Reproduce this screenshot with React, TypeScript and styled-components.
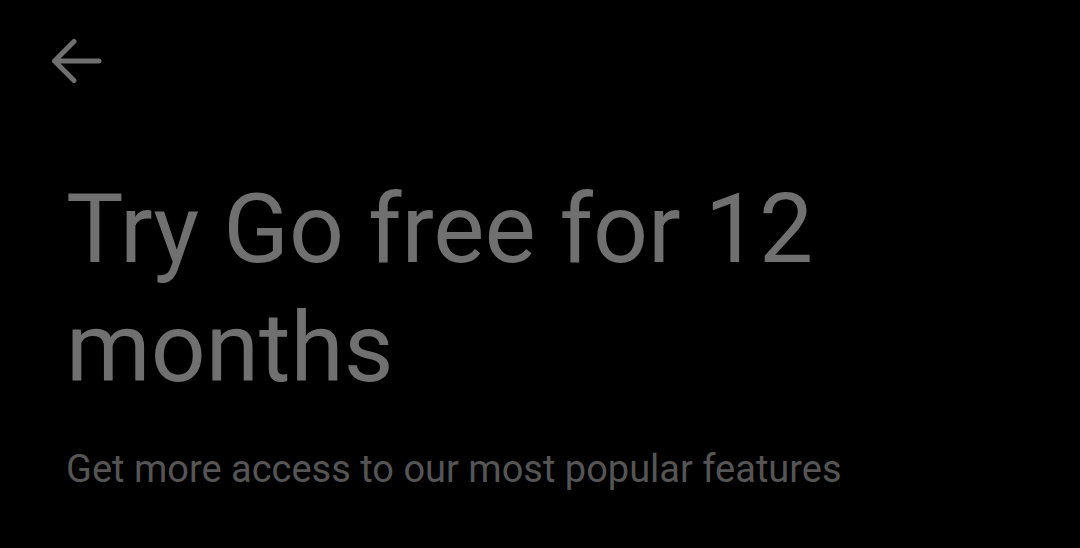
import React from "react";
import styled, { createGlobalStyle } from "styled-components";

const GlobalStyle = createGlobalStyle`
  html, body {
    margin: 0;
    padding: 0;
    background: #000000;
  }
  body {
    font-family: Roboto, "Noto Sans", "Liberation Sans", sans-serif;
  }
`;

const Screen = styled.div`
  width: 1080px;
  height: 548px;
  background: #000000;
  display: flex;
  flex-direction: column;
  overflow: hidden;
`;

const TopBar = styled.div`
  display: flex;
  align-items: center;
  height: 46px;
  padding: 38px 0 0 50px;
`;

const BackButton = styled.button`
  display: flex;
  align-items: center;
  justify-content: center;
  width: 52px;
  height: 46px;
  padding: 0;
  border: none;
  background: transparent;
  cursor: pointer;
`;

const Content = styled.div`
  display: flex;
  flex-direction: column;
  padding: 86px 0 0 66px;
`;

const Title = styled.h1`
  margin: 0;
  font-family: Roboto, "Noto Sans", "Liberation Sans", sans-serif;
  font-weight: 400;
  font-size: 96.5px;
  line-height: 119px;
  color: #707070;
  max-width: 820px;
`;

const Subtitle = styled.p`
  margin: 37px 0 0 0;
  font-family: Roboto, "Noto Sans", "Liberation Sans", sans-serif;
  font-weight: 400;
  font-size: 38px;
  line-height: 48px;
  color: #555555;
`;

export default function App() {
  return (
    <>
      <GlobalStyle />
      <Screen>
        <TopBar>
          <BackButton aria-label="Back">
            <svg width="52" height="46" viewBox="0 0 52 46" fill="none">
              <path
                d="M49 23H4.5M24 3.5L4.5 23l19.5 19.5"
                stroke="#707070"
                strokeWidth="5"
                strokeLinecap="round"
                strokeLinejoin="round"
              />
            </svg>
          </BackButton>
        </TopBar>
        <Content>
          <Title>Try Go free for 12 months</Title>
          <Subtitle>Get more access to our most popular features</Subtitle>
        </Content>
      </Screen>
    </>
  );
}
